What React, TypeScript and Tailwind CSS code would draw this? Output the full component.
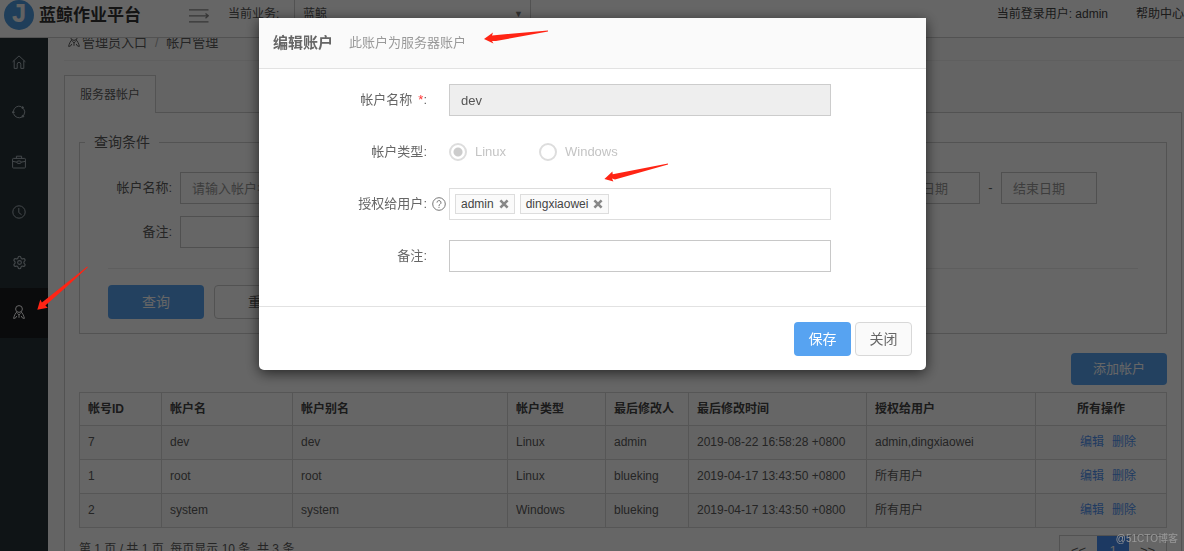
import type { ReactNode } from "react";
import { Settings } from "lucide-react";

interface Account {
  id: number;
  name: string;
  alias: string;
  type: string;
  editor: string;
  editedAt: string;
  users: string;
}

const ACCOUNTS: Account[] = [
  { id: 7, name: "dev", alias: "dev", type: "Linux", editor: "admin", editedAt: "2019-08-22 16:58:28 +0800", users: "admin,dingxiaowei" },
  { id: 1, name: "root", alias: "root", type: "Linux", editor: "blueking", editedAt: "2019-04-17 13:43:50 +0800", users: "所有用户" },
  { id: 2, name: "system", alias: "system", type: "Windows", editor: "blueking", editedAt: "2019-04-17 13:43:50 +0800", users: "所有用户" },
];

const COLUMNS = [
  { title: "帐号ID", cls: "w-[82px] text-left" },
  { title: "帐户名", cls: "w-[131px] text-left" },
  { title: "帐户别名", cls: "text-left" },
  { title: "帐户类型", cls: "w-[98px] text-left" },
  { title: "最后修改人", cls: "w-[83px] text-left" },
  { title: "最后修改时间", cls: "w-[178px] text-left" },
  { title: "授权给用户", cls: "w-[169px] text-left" },
  { title: "所有操作", cls: "w-[131px] text-center" },
];

function Icon({ children }: { children: ReactNode }) {
  return (
    <svg viewBox="0 0 14 14" className="size-3.5" fill="none" stroke="currentColor" strokeWidth="1">
      {children}
    </svg>
  );
}

function PersonIcon() {
  return (
    <Icon>
      <circle cx="7" cy="4" r="3.4" />
      <path d="M5 6.8C3.4 8.2 2.2 10.6 1.6 13.4l1.8-.3L4.8 11M9 6.8c1.6 1.4 2.8 3.8 3.4 6.6l-1.8-.3L9.2 11M7 9.6v3.2M5.4 8.4 7 9.8l1.6-1.4" />
    </Icon>
  );
}

const NAV = [
  {
    label: "首页",
    icon: (
      <Icon>
        <path d="M.6 6.8 7 .9l6.4 5.9M2.2 5.6v7.8h3V9.2a1.8 1.8 0 0 1 3.6 0v4.2h3V5.6" />
      </Icon>
    ),
  },
  {
    label: "作业",
    icon: (
      <Icon>
        <path d="M1.4 6.2A5.8 5.8 0 0 1 9.3 1.6M11.6 3.6a5.8 5.8 0 0 1 .2 6.6M10 12a5.8 5.8 0 0 1-8.3-3" />
        <circle cx="10.6" cy="2.6" r=".9" fill="currentColor" />
        <circle cx="10.9" cy="11.2" r=".9" fill="currentColor" />
        <circle cx="1.3" cy="7.3" r=".9" fill="currentColor" />
      </Icon>
    ),
  },
  {
    label: "工具",
    icon: (
      <Icon>
        <rect x=".6" y="3.4" width="12.8" height="9.6" rx=".8" />
        <path d="M4.4 3.4V1.2h5.2v2.2M.8 6.4l4.2.8M13.2 6.4 9 7.2" />
        <rect x="5" y="6" width="4" height="2.4" rx="1" />
      </Icon>
    ),
  },
  {
    label: "历史",
    icon: (
      <Icon>
        <circle cx="7" cy="7" r="6.2" />
        <path d="M6.8 3v4.6l2.8 2.2" />
      </Icon>
    ),
  },
  { label: "设置", icon: <Settings size={15} strokeWidth={1.8} /> },
  { label: "管理员入口", icon: <PersonIcon />, active: true },
];

function TopBar() {
  return (
    <header className="flex h-[38px] shrink-0 items-start overflow-hidden border-b border-[#ccc] bg-white text-[12px] text-[#555]">
      <div className="ml-1 flex size-[30px] shrink-0 items-center justify-center rounded-full bg-[#4f9be0] font-['Liberation_Mono'] text-[27px] font-bold leading-none text-[#f4f4f4]">
        J
      </div>
      <h1 className="ml-[5px] w-[150px] shrink-0 text-[17px] font-bold leading-8 text-[#333]">蓝鲸作业平台</h1>
      <button type="button" aria-label="收起菜单" className="mt-[9px] shrink-0 text-[#888]">
        <svg viewBox="0 0 20 14" className="h-3.5 w-5" fill="none" stroke="currentColor" strokeWidth="1.3">
          <path d="M0 .8h19.5M0 6.8h19M0 12.8h19.5M16.5 4.4l2.8 2.4-2.8 2.4" />
        </svg>
      </button>
      <label htmlFor="biz" className="ml-[19px] w-[66px] shrink-0 leading-7">
        当前业务:
      </label>
      <div className="relative w-[237px]">
        <select id="biz" className="h-7 w-full appearance-none border-x border-[#ccc] bg-white pl-2 text-[12px] text-[#555]">
          <option>蓝鲸</option>
        </select>
        <span className="pointer-events-none absolute right-2 top-0 text-[9px] leading-7 text-[#777]">▼</span>
      </div>
      <div className="ml-auto flex gap-7 leading-7 text-[#444]">
        <span>当前登录用户: admin</span>
        <a href="#help">帮助中心</a>
      </div>
    </header>
  );
}

function SideNav() {
  return (
    <nav className="w-12 shrink-0 bg-[#263238]">
      {NAV.map(item => (
        <a
          key={item.label}
          href="#nav"
          aria-label={item.label}
          className={`flex h-[50px] items-center pb-0.5 pl-3 ${item.active ? "bg-[#1b1d1f] text-white" : "text-[#a9b4ba]"}`}
        >
          {item.icon}
        </a>
      ))}
    </nav>
  );
}

const FIELD = "h-8 border border-[#c8c8c8] bg-transparent px-[11px] text-[13px] text-[#555] placeholder:text-[#999]";

function SearchForm() {
  return (
    <fieldset className="border border-[#d0d0d0] pb-3.5">
      <legend className="ml-[5px] px-[9px] text-[14px] leading-5">查询条件</legend>
      <div className="flex items-center pr-[69px] pt-5">
        <label htmlFor="q-name" className="w-[100px] pr-[8px] text-right text-[13px]">
          帐户名称:
        </label>
        <input id="q-name" placeholder="请输入帐户名称" className={`${FIELD} w-[236px]`} />
        <input aria-label="起始日期" placeholder="起始日期" className={`${FIELD} ml-auto w-24`} />
        <span className="w-[21px] text-center text-[13px]">-</span>
        <input aria-label="结束日期" placeholder="结束日期" className={`${FIELD} w-24`} />
      </div>
      <div className="mt-3 flex items-center">
        <label htmlFor="q-note" className="w-[100px] pr-[8px] text-right text-[13px]">
          备注:
        </label>
        <input id="q-note" className={`${FIELD} w-[236px]`} />
      </div>
      <hr className="mx-7 mt-5 border-[#eaeaea]" />
      <div className="mt-4 flex gap-2.5 pl-7">
        <button type="button" className="h-[34px] w-24 rounded-sm bg-[#57a3f1] text-[14px] text-white">
          查询
        </button>
        <button type="button" className="h-[34px] w-24 rounded-sm border border-[#ccc] text-[14px]">
          重置
        </button>
      </div>
    </fieldset>
  );
}

function AccountTable() {
  return (
    <table className="mt-[7px] w-full table-fixed border-collapse">
      <thead>
        <tr className="h-[33px]">
          {COLUMNS.map(c => (
            <th key={c.title} className={`border border-[#d6d6d6] px-2 font-bold text-[#444] ${c.cls}`}>
              {c.title}
            </th>
          ))}
        </tr>
      </thead>
      <tbody>
        {ACCOUNTS.map(a => (
          <tr key={a.id} className="h-[34px] odd:bg-[#fafafa]">
            {[a.id, a.name, a.alias, a.type, a.editor, a.editedAt, a.users].map((v, i) => (
              <td key={i} className="whitespace-nowrap border border-[#d6d6d6] px-2 pb-0.5">
                {v}
              </td>
            ))}
            <td className="border border-[#d6d6d6] pb-0.5 pl-3.5 text-center text-[#5294f3]">
              <a href="#edit" className="px-1">
                编辑
              </a>
              <a href="#delete" className="px-1">
                删除
              </a>
            </td>
          </tr>
        ))}
      </tbody>
    </table>
  );
}

function Content() {
  return (
    <main className="min-w-0 flex-1 overflow-hidden bg-[#fafafa] pl-4 pr-[2px] text-[12px] text-[#5c5c5c]">
      <div className="-mt-[5px] flex h-7 items-start border-b border-[#eee] pl-[3px] leading-5">
        <span className="mr-px">
          <PersonIcon />
        </span>
        <a href="#admin" className="text-[13px]">管理员入口</a>
        <span className="mx-2 text-[#aaa]">/</span>
        <span className="text-[13px]">帐户管理</span>
      </div>

      <div className="mt-3.5 flex">
        <button
          type="button"
          className="relative z-10 -mb-px h-[38px] w-[92px] border border-b-0 border-[#d0d0d0] bg-white text-[12px]"
        >
          服务器帐户
        </button>
      </div>

      <section className="border border-[#ccc] bg-white px-3.5 pt-[19px]">
        <SearchForm />
        <div className="mt-[19px] flex justify-end">
          <button type="button" className="h-8 w-24 rounded-sm bg-[#57a3f1] text-[13px] text-white">
            添加帐户
          </button>
        </div>
        <AccountTable />
        <div className="mt-[7px] flex items-start justify-between">
          <p className="mt-1 leading-5">第 1 页 / 共 1 页, 每页显示 10 条, 共 3 条</p>
          <div className="flex h-8 border border-[#ccc] text-[13px]">
            <button type="button" className="w-[37px]">&lt;&lt;</button>
            <button type="button" className="w-8 bg-[#468ff5] text-white">1</button>
            <button type="button" className="w-[37px]">&gt;&gt;</button>
          </div>
        </div>
      </section>
    </main>
  );
}

function Row({ label, htmlFor, required, help, children }: {
  label: string;
  htmlFor?: string;
  required?: boolean;
  help?: boolean;
  children: ReactNode;
}) {
  return (
    <div className="flex h-8 items-center">
      <label htmlFor={htmlFor} className="w-[168px] text-right text-[13px]">
        {label}
        {required && <span className="ml-1.5 text-[#f33]">*</span>}:
      </label>
      <span className="flex w-[22px] justify-end pr-[3px]">
        {help && (
          <svg viewBox="0 0 14 14" className="size-3.5" fill="none" stroke="#777" strokeWidth="1">
            <circle cx="7" cy="7" r="6.3" />
            <path d="M5 5.6a2 2 0 1 1 3 1.7c-.7.4-1 .8-1 1.6M7 9.8v1.1" />
          </svg>
        )}
      </span>
      {children}
    </div>
  );
}

function Tag({ name }: { name: string }) {
  return (
    <span className="flex h-5 items-center gap-[5px] border border-[#ddd] bg-[#fafafa] px-[5px] text-[12px] text-[#444]">
      {name}
      <button type="button" aria-label={`移除 ${name}`} className="text-[#888]">
        <svg viewBox="0 0 10 10" className="size-2.5" stroke="currentColor" strokeWidth="2.6">
          <path d="m1.4 1.4 7.2 7.2M8.6 1.4 1.4 8.6" />
        </svg>
      </button>
    </span>
  );
}

const RADIO =
  "size-[18px] appearance-none rounded-full border-2 border-[#ddd] bg-white checked:bg-[radial-gradient(circle,#ccc_4px,transparent_5px)]";

function EditDialog() {
  return (
    <div className="fixed inset-0 z-20 flex items-start justify-center bg-black/60 pl-px pt-[18px]">
      <div
        role="dialog"
        aria-label="编辑账户"
        className="relative w-[667px] rounded-b-[5px] bg-white text-[#666] shadow-[0_3px_14px_rgba(0,0,0,0.65)]"
      >
        <div className="flex h-[51px] items-center border-b border-[#e2e2e2] bg-[#fafafa] pl-3.5">
          <h2 className="text-[15px] font-bold">编辑账户</h2>
          <span className="ml-4 text-[13px] text-[#999]">此账户为服务器账户</span>
        </div>

        <div className="space-y-5 pb-[34px] pt-[15px]">
          <Row label="帐户名称" htmlFor="name" required>
            <input
              id="name"
              disabled
              defaultValue="dev"
              className="h-8 w-[382px] border border-[#ccc] bg-[#eee] px-[11px] text-[13px] text-[#555]"
            />
          </Row>
          <Row label="帐户类型">
            <label className="flex w-[90px] items-center gap-2 text-[13px] text-[#c4c4c4]">
              <input type="radio" name="type" disabled defaultChecked className={RADIO} />
              Linux
            </label>
            <label className="flex items-center gap-2 text-[13px] text-[#c4c4c4]">
              <input type="radio" name="type" disabled className={RADIO} />
              Windows
            </label>
          </Row>
          <Row label="授权给用户" htmlFor="users" help>
            <div className="flex h-8 w-[382px] items-center gap-[5px] border border-[#ddd] px-[5px]">
              <Tag name="admin" />
              <Tag name="dingxiaowei" />
              <input id="users" className="min-w-0 flex-1 text-[12px] outline-none" />
            </div>
          </Row>
          <Row label="备注" htmlFor="note">
            <input id="note" className="h-8 w-[382px] border border-[#c8c8c8] px-[11px] text-[13px]" />
          </Row>
        </div>

        <div className="flex justify-end gap-1 border-t border-[#e2e2e2] px-3.5 pb-3.5 pt-[15px] text-[14px]">
          <button type="button" className="h-[34px] w-[57px] rounded-sm bg-[#57a3f1] text-white">
            保存
          </button>
          <button type="button" className="h-[34px] w-[57px] rounded-sm border border-[#d8d8d8] bg-[#fafafa]">
            关闭
          </button>
        </div>

        {/* Hand-drawn pointers to the subtitle and the user tags */}
        <svg viewBox="0 0 66 14" className="absolute left-[225px] top-3 h-3.5 w-[66px]" fill="#ff2414">
          <path d="M0 9 9 2.6 8 5.4 64 .4v1.2L12 11H8l1.5 2.6Z" />
        </svg>
        <svg viewBox="0 0 65 19" className="absolute left-[345px] top-[145px] h-[19px] w-[65px]" fill="#ff2414">
          <path d="m.4 16 8-7.4.3 2.6L64 .4v1.2L11 16.4l-3-.8 1.4 3Z" />
        </svg>
      </div>
    </div>
  );
}

export default function App() {
  return (
    <div className="relative flex h-screen flex-col overflow-hidden font-['Liberation_Sans','Noto_Sans_CJK_SC',sans-serif]">
      <TopBar />
      <div className="flex min-h-0 flex-1">
        <SideNav />
        <Content />
      </div>
      <EditDialog />

      {/* Pointer to the active menu entry */}
      <svg viewBox="0 0 52 45" className="absolute left-[37px] top-[266px] z-30 h-[45px] w-[52px]" fill="#ff2414">
        <path d="m.3 43.8 3-10.4 1.6 3.2L50.3.4l.5.9L31 19.6 8.4 39.4l2.4 2.4Z" />
      </svg>
      <span className="absolute bottom-1 right-1.5 z-30 text-[10px] leading-4 text-[#999]">@51CTO博客</span>
    </div>
  );
}
